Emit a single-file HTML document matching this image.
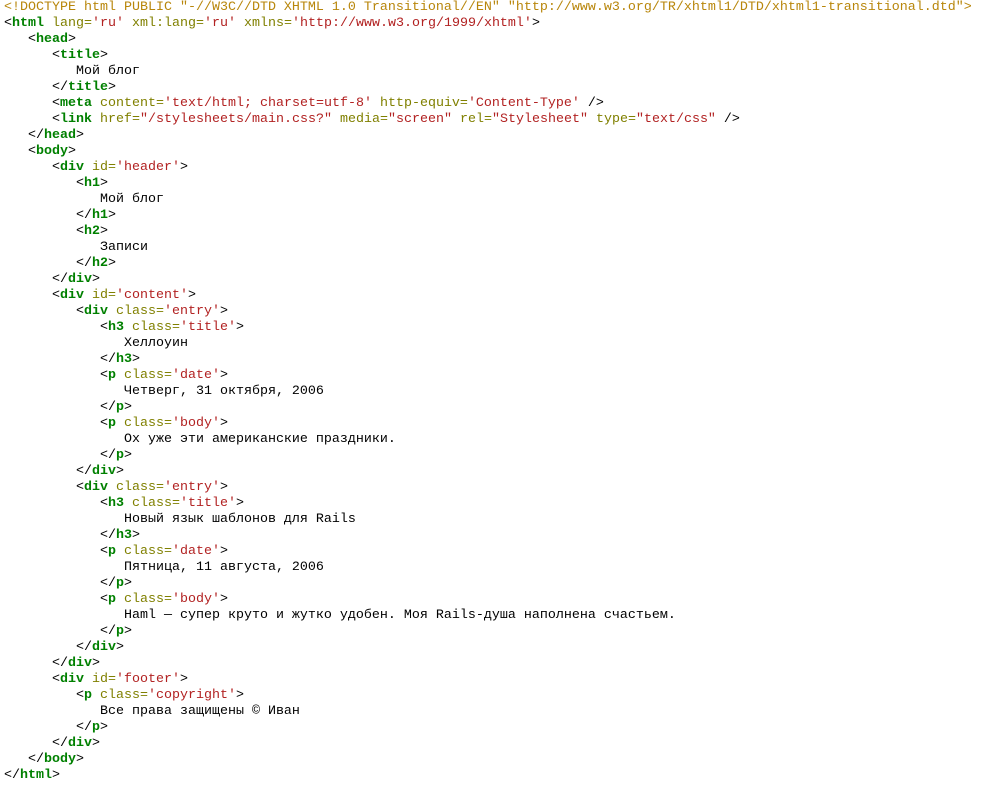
<!DOCTYPE html>
<html><head><meta charset="utf-8"><style>
body{margin:0;background:#fff}
pre{margin:0;padding:0 0 0 4px;font-family:"Liberation Mono","DejaVu Sans Mono",monospace;font-size:13.33px;line-height:16px;color:#000}
.d{color:#b8860b}.t{color:#008000;font-weight:bold}.a{color:#808000}.v{color:#b22222}
</style></head><body><pre><span class="d">&lt;!DOCTYPE html PUBLIC "-//W3C//DTD XHTML 1.0 Transitional//EN" "http://www.w3.org/TR/xhtml1/DTD/xhtml1-transitional.dtd"&gt;</span>
&lt;<span class="t">html</span> <span class="a">lang=</span><span class="v">'ru'</span> <span class="a">xml:lang=</span><span class="v">'ru'</span> <span class="a">xmlns=</span><span class="v">'http://www.w3.org/1999/xhtml'</span>&gt;
   &lt;<span class="t">head</span>&gt;
      &lt;<span class="t">title</span>&gt;
         Мой блог
      &lt;/<span class="t">title</span>&gt;
      &lt;<span class="t">meta</span> <span class="a">content=</span><span class="v">'text/html; charset=utf-8'</span> <span class="a">http-equiv=</span><span class="v">'Content-Type'</span> /&gt;
      &lt;<span class="t">link</span> <span class="a">href=</span><span class="v">"/stylesheets/main.css?"</span> <span class="a">media=</span><span class="v">"screen"</span> <span class="a">rel=</span><span class="v">"Stylesheet"</span> <span class="a">type=</span><span class="v">"text/css"</span> /&gt;
   &lt;/<span class="t">head</span>&gt;
   &lt;<span class="t">body</span>&gt;
      &lt;<span class="t">div</span> <span class="a">id=</span><span class="v">'header'</span>&gt;
         &lt;<span class="t">h1</span>&gt;
            Мой блог
         &lt;/<span class="t">h1</span>&gt;
         &lt;<span class="t">h2</span>&gt;
            Записи
         &lt;/<span class="t">h2</span>&gt;
      &lt;/<span class="t">div</span>&gt;
      &lt;<span class="t">div</span> <span class="a">id=</span><span class="v">'content'</span>&gt;
         &lt;<span class="t">div</span> <span class="a">class=</span><span class="v">'entry'</span>&gt;
            &lt;<span class="t">h3</span> <span class="a">class=</span><span class="v">'title'</span>&gt;
               Хеллоуин
            &lt;/<span class="t">h3</span>&gt;
            &lt;<span class="t">p</span> <span class="a">class=</span><span class="v">'date'</span>&gt;
               Четверг, 31 октября, 2006
            &lt;/<span class="t">p</span>&gt;
            &lt;<span class="t">p</span> <span class="a">class=</span><span class="v">'body'</span>&gt;
               Ох уже эти американские праздники.
            &lt;/<span class="t">p</span>&gt;
         &lt;/<span class="t">div</span>&gt;
         &lt;<span class="t">div</span> <span class="a">class=</span><span class="v">'entry'</span>&gt;
            &lt;<span class="t">h3</span> <span class="a">class=</span><span class="v">'title'</span>&gt;
               Новый язык шаблонов для Rails
            &lt;/<span class="t">h3</span>&gt;
            &lt;<span class="t">p</span> <span class="a">class=</span><span class="v">'date'</span>&gt;
               Пятница, 11 августа, 2006
            &lt;/<span class="t">p</span>&gt;
            &lt;<span class="t">p</span> <span class="a">class=</span><span class="v">'body'</span>&gt;
               Haml — супер круто и жутко удобен. Моя Rails-душа наполнена счастьем.
            &lt;/<span class="t">p</span>&gt;
         &lt;/<span class="t">div</span>&gt;
      &lt;/<span class="t">div</span>&gt;
      &lt;<span class="t">div</span> <span class="a">id=</span><span class="v">'footer'</span>&gt;
         &lt;<span class="t">p</span> <span class="a">class=</span><span class="v">'copyright'</span>&gt;
            Все права защищены © Иван
         &lt;/<span class="t">p</span>&gt;
      &lt;/<span class="t">div</span>&gt;
   &lt;/<span class="t">body</span>&gt;
&lt;/<span class="t">html</span>&gt;</pre></body></html>
